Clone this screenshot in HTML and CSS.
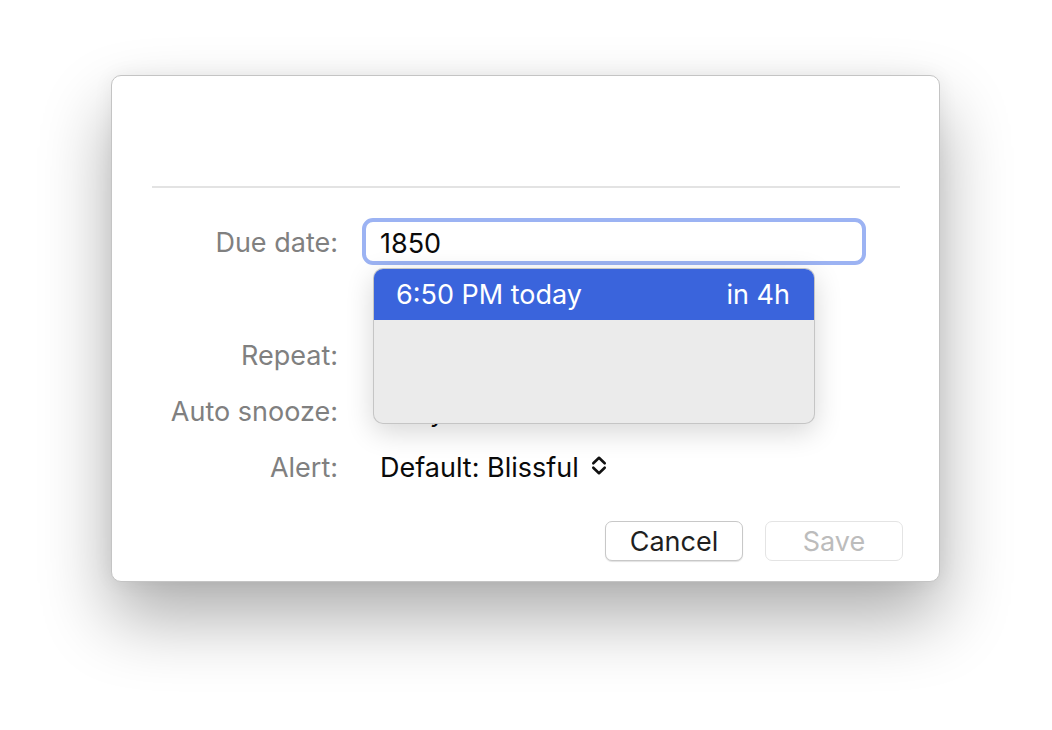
FILE: index.html
```html
<!DOCTYPE html>
<html>
<head>
<meta charset="utf-8">
<link rel="stylesheet" href="styles.css">
</head>
<body>
<div class="stage">
  <div class="dialog">
    <div class="header"></div>
    <div class="separator"></div>
    <div class="form">
      <div class="row row-due">
        <div class="label">Due date:</div>
        <div class="field-wrap">
          <div class="input"><span class="input-text">1850</span></div>
          <div class="dropdown">
            <div class="option selected"><span>6:50 PM today</span><span>in 4h</span></div>
            <div class="option-rest"></div>
          </div>
        </div>
      </div>
      <div class="row row-repeat">
        <div class="label">Repeat:</div>
        <div class="value">Never</div>
      </div>
      <div class="row">
        <div class="label">Auto snooze:</div>
        <div class="value">1 day</div>
      </div>
      <div class="row">
        <div class="label">Alert:</div>
        <div class="value popup">Default: Blissful
          <svg class="chev" width="16" height="21" viewBox="0 0 16 21"><path d="M2.3 8.3 L8 2.8 L13.7 8.3" fill="none" stroke="#111111" stroke-width="2.6" stroke-linecap="round" stroke-linejoin="round"/><path d="M2.3 12.7 L8 18.2 L13.7 12.7" fill="none" stroke="#111111" stroke-width="2.6" stroke-linecap="round" stroke-linejoin="round"/></svg>
        </div>
      </div>
    </div>
    <div class="buttons">
      <div class="btn">Cancel</div>
      <div class="btn disabled">Save</div>
    </div>
  </div>
</div>
</body>
</html>
```
FILE: styles.css
```css
html, body {
  margin: 0;
  padding: 0;
  background: #ffffff;
}
body {
  font-family: Inter, "Noto Sans", "Liberation Sans", sans-serif;
  font-size: 27px;
  color: #1c1c1c;
}
.stage {
  padding: 75px 0 0 111px;
  width: 1052px;
  height: 730px;
  box-sizing: border-box;
  overflow: hidden;
}
.dialog {
  width: 829px;
  height: 507px;
  box-sizing: border-box;
  background: #ffffff;
  border: 1px solid #c4c4c4;
  border-radius: 10px;
  box-shadow: 0 36px 70px rgba(0, 0, 0, 0.32), 0 0 20px rgba(0, 0, 0, 0.06);
  display: flex;
  flex-direction: column;
}
.header {
  height: 110px;
}
.separator {
  height: 2px;
  background: #e3e3e3;
  margin: 0 39px 0 40px;
}
.form {
  margin-top: 30px;
  display: flex;
  flex-direction: column;
}
.row {
  display: flex;
  align-items: center;
  height: 56px;
}
.row-due {
  height: 47px;
  position: relative;
  z-index: 2;
}
.row-repeat {
  margin-top: 61px;
}
.label {
  width: 226px;
  text-align: right;
  color: #808080;
  flex: none;
  padding-top: 2px;
}
.field-wrap {
  position: relative;
  margin-left: 24px;
}
.input {
  width: 504px;
  height: 47px;
  box-sizing: border-box;
  border: 4px solid #9cb3f3;
  border-radius: 11px;
  background: #ffffff;
  display: flex;
  align-items: center;
  padding-left: 14px;
  color: #0a0a0a;
}
.input-text {
  margin-top: 4px;
}
.dropdown {
  position: absolute;
  left: 11px;
  top: 50px;
  width: 442px;
  height: 156px;
  box-sizing: border-box;
  border-radius: 10px;
  background: #ebebeb;
  overflow: hidden;
  border: 1px solid rgba(0, 0, 0, 0.16);
  box-shadow: 0 8px 28px rgba(0, 0, 0, 0.16);
  display: flex;
  flex-direction: column;
}
.option {
  height: 51px;
  display: flex;
  align-items: center;
  justify-content: space-between;
  padding: 0 24px 0 22px;
  color: #ffffff;
  flex: none;
}
.option.selected {
  background: #3a64dc;
}
.option-rest {
  flex: 1;
}
.value {
  margin-left: 42px;
  color: #0a0a0a;
  display: flex;
  align-items: center;
  padding-top: 2px;
}
.chev {
  margin-left: 12px;
  margin-top: -3px;
}
.buttons {
  margin-top: 27px;
  display: flex;
  justify-content: flex-end;
  gap: 22px;
  padding-right: 36px;
}
.btn {
  width: 138px;
  height: 40px;
  box-sizing: border-box;
  border: 1px solid #c8c8c8;
  border-radius: 7px;
  background: #ffffff;
  box-shadow: 0 1px 1px rgba(0, 0, 0, 0.12);
  display: flex;
  align-items: center;
  justify-content: center;
  color: #1f1f1f;
}
.btn.disabled {
  border-color: #e4e4e4;
  box-shadow: none;
  color: #bcbcbc;
}
```
